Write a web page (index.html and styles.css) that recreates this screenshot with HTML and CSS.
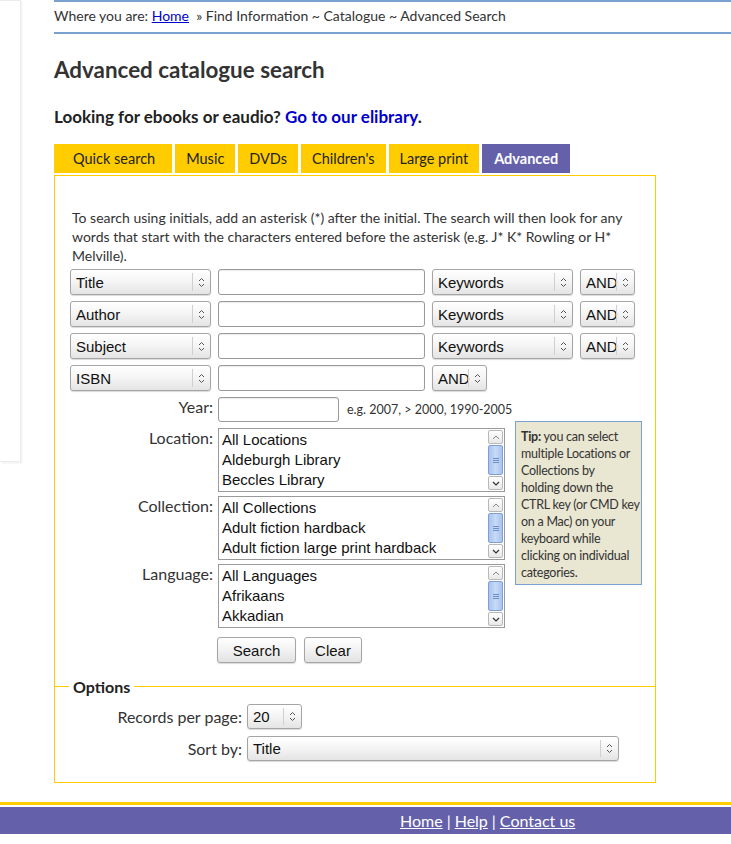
FILE: index.html
```html
<!DOCTYPE html>
<html lang="en">
<head>
<meta charset="utf-8">
<title>Advanced catalogue search</title>
<link rel="stylesheet" href="styles.css">
</head>
<body>
<div class="page">
  <div class="sidebar"></div>
  <div class="main">
    <div class="crumbs">Where you are: <a href="#">Home</a> &nbsp;» Find Information ~ Catalogue ~ Advanced Search</div>
    <h1>Advanced catalogue search</h1>
    <p class="ebooks">Looking for ebooks or eaudio? <a href="#">Go to our elibrary</a>.</p>
    <nav class="tabs">
      <a class="tab first" href="#">Quick search</a>
      <a class="tab" href="#">Music</a>
      <a class="tab" href="#">DVDs</a>
      <a class="tab" href="#">Children's</a>
      <a class="tab" href="#">Large print</a>
      <a class="tab active" href="#">Advanced</a>
    </nav>
    <div class="box">
      <p class="intro">To search using initials, add an asterisk (*) after the initial. The search will then look for any words that start with the characters entered before the asterisk (e.g. J* K* Rowling or H* Melville).</p>
      <div class="terms">
        <div class="term">
          <span class="sel w141"><span class="val">Title</span><span class="arr"><svg viewBox="0 0 7 11" width="7" height="11"><path d="M1 4 L3.5 1.5 L6 4 M1 7 L3.5 9.5 L6 7" fill="none" stroke="#555" stroke-width="1"/></svg></span></span>
          <span class="txt w206"></span>
          <span class="sel w141"><span class="val">Keywords</span><span class="arr"><svg viewBox="0 0 7 11" width="7" height="11"><path d="M1 4 L3.5 1.5 L6 4 M1 7 L3.5 9.5 L6 7" fill="none" stroke="#555" stroke-width="1"/></svg></span></span>
          <span class="sel w55"><span class="val">AND</span><span class="arr"><svg viewBox="0 0 7 11" width="7" height="11"><path d="M1 4 L3.5 1.5 L6 4 M1 7 L3.5 9.5 L6 7" fill="none" stroke="#555" stroke-width="1"/></svg></span></span>
        </div>
        <div class="term">
          <span class="sel w141"><span class="val">Author</span><span class="arr"><svg viewBox="0 0 7 11" width="7" height="11"><path d="M1 4 L3.5 1.5 L6 4 M1 7 L3.5 9.5 L6 7" fill="none" stroke="#555" stroke-width="1"/></svg></span></span>
          <span class="txt w206"></span>
          <span class="sel w141"><span class="val">Keywords</span><span class="arr"><svg viewBox="0 0 7 11" width="7" height="11"><path d="M1 4 L3.5 1.5 L6 4 M1 7 L3.5 9.5 L6 7" fill="none" stroke="#555" stroke-width="1"/></svg></span></span>
          <span class="sel w55"><span class="val">AND</span><span class="arr"><svg viewBox="0 0 7 11" width="7" height="11"><path d="M1 4 L3.5 1.5 L6 4 M1 7 L3.5 9.5 L6 7" fill="none" stroke="#555" stroke-width="1"/></svg></span></span>
        </div>
        <div class="term">
          <span class="sel w141"><span class="val">Subject</span><span class="arr"><svg viewBox="0 0 7 11" width="7" height="11"><path d="M1 4 L3.5 1.5 L6 4 M1 7 L3.5 9.5 L6 7" fill="none" stroke="#555" stroke-width="1"/></svg></span></span>
          <span class="txt w206"></span>
          <span class="sel w141"><span class="val">Keywords</span><span class="arr"><svg viewBox="0 0 7 11" width="7" height="11"><path d="M1 4 L3.5 1.5 L6 4 M1 7 L3.5 9.5 L6 7" fill="none" stroke="#555" stroke-width="1"/></svg></span></span>
          <span class="sel w55"><span class="val">AND</span><span class="arr"><svg viewBox="0 0 7 11" width="7" height="11"><path d="M1 4 L3.5 1.5 L6 4 M1 7 L3.5 9.5 L6 7" fill="none" stroke="#555" stroke-width="1"/></svg></span></span>
        </div>
        <div class="term">
          <span class="sel w141"><span class="val">ISBN</span><span class="arr"><svg viewBox="0 0 7 11" width="7" height="11"><path d="M1 4 L3.5 1.5 L6 4 M1 7 L3.5 9.5 L6 7" fill="none" stroke="#555" stroke-width="1"/></svg></span></span>
          <span class="txt w206"></span>
          <span class="sel w55"><span class="val">AND</span><span class="arr"><svg viewBox="0 0 7 11" width="7" height="11"><path d="M1 4 L3.5 1.5 L6 4 M1 7 L3.5 9.5 L6 7" fill="none" stroke="#555" stroke-width="1"/></svg></span></span>
        </div>
      </div>

      <div class="filters">
        <label class="lbl r-year">Year:</label>
        <div class="ctl r-year yearrow"><span class="txt w121 h25"></span><span class="hint">e.g. 2007, &gt; 2000, 1990-2005</span></div>

        <label class="lbl r-loc">Location:</label>
        <div class="ctl r-loc list">
          <div class="items"><div>All Locations</div><div>Aldeburgh Library</div><div>Beccles Library</div></div>
          <div class="sb"><span class="sb-up"><svg viewBox="0 0 8 5" width="8" height="5"><path d="M1 4 L4 1 L7 4" fill="none" stroke="#888"/></svg></span><span class="sb-thumb"><svg viewBox="0 0 6 7" width="6" height="7"><path d="M0 1.5H6M0 3.5H6M0 5.5H6" stroke="#6b8fc8"/></svg></span><span class="sb-down"><svg viewBox="0 0 8 5" width="8" height="5"><path d="M1 1 L4 4 L7 1" fill="none" stroke="#333" stroke-width="1.2"/></svg></span></div>
        </div>

        <label class="lbl r-col">Collection:</label>
        <div class="ctl r-col list">
          <div class="items"><div>All Collections</div><div>Adult fiction hardback</div><div>Adult fiction large print hardback</div></div>
          <div class="sb"><span class="sb-up"><svg viewBox="0 0 8 5" width="8" height="5"><path d="M1 4 L4 1 L7 4" fill="none" stroke="#888"/></svg></span><span class="sb-thumb"><svg viewBox="0 0 6 7" width="6" height="7"><path d="M0 1.5H6M0 3.5H6M0 5.5H6" stroke="#6b8fc8"/></svg></span><span class="sb-down"><svg viewBox="0 0 8 5" width="8" height="5"><path d="M1 1 L4 4 L7 1" fill="none" stroke="#333" stroke-width="1.2"/></svg></span></div>
        </div>

        <label class="lbl r-lang">Language:</label>
        <div class="ctl r-lang list">
          <div class="items"><div>All Languages</div><div>Afrikaans</div><div>Akkadian</div></div>
          <div class="sb"><span class="sb-up"><svg viewBox="0 0 8 5" width="8" height="5"><path d="M1 4 L4 1 L7 4" fill="none" stroke="#888"/></svg></span><span class="sb-thumb"><svg viewBox="0 0 6 7" width="6" height="7"><path d="M0 1.5H6M0 3.5H6M0 5.5H6" stroke="#6b8fc8"/></svg></span><span class="sb-down"><svg viewBox="0 0 8 5" width="8" height="5"><path d="M1 1 L4 4 L7 1" fill="none" stroke="#333" stroke-width="1.2"/></svg></span></div>
        </div>

        <div class="ctl r-btn buttons"><button class="btn w79">Search</button><button class="btn w58">Clear</button></div>

        <aside class="tip">
          <span class="tl"><b>Tip:</b> you can select</span>
          <span class="tl">multiple Locations or</span>
          <span class="tl">Collections by</span>
          <span class="tl">holding down the</span>
          <span class="tl">CTRL key (or CMD key</span>
          <span class="tl">on a Mac) on your</span>
          <span class="tl">keyboard while</span>
          <span class="tl">clicking on individual</span>
          <span class="tl">categories.</span>
        </aside>
      </div>

      <fieldset class="options">
        <legend>Options</legend>
        <div class="optgrid">
          <label class="olbl">Records per page:</label>
          <span class="sel w55 h25"><span class="val">20</span><span class="arr"><svg viewBox="0 0 7 11" width="7" height="11"><path d="M1 4 L3.5 1.5 L6 4 M1 7 L3.5 9.5 L6 7" fill="none" stroke="#555" stroke-width="1"/></svg></span></span>
          <label class="olbl">Sort by:</label>
          <span class="sel w372 h25"><span class="val">Title</span><span class="arr"><svg viewBox="0 0 7 11" width="7" height="11"><path d="M1 4 L3.5 1.5 L6 4 M1 7 L3.5 9.5 L6 7" fill="none" stroke="#555" stroke-width="1"/></svg></span></span>
        </div>
      </fieldset>
    </div>
  </div>
</div>
<footer class="footer">
  <div class="footer-bar"><a href="#">Home</a><span class="sep">|</span><a href="#">Help</a><span class="sep">|</span><a href="#">Contact us</a></div>
</footer>
</body>
</html>
```
FILE: styles.css
```css
* { box-sizing: border-box; }
html, body { margin: 0; padding: 0; background: #fff; }
body {
  font-family: "Lato", "Noto Sans", sans-serif;
  color: #333;
  font-size: 15px;
}
.page { display: flex; align-items: flex-start; }
.sidebar {
  width: 21px;
  height: 462px;
  border: 1px solid #ececec;
  border-left: none;
  box-shadow: 1px 1px 0 #f5f5f5, 2px 2px 0 #f8f8f8;
  flex: none;
}
.main { flex: 1; margin-left: 33px; }

.crumbs {
  height: 34px;
  border-top: 2px solid #7aa0cf;
  border-bottom: 2px solid #7aa0cf;
  font-size: 14px;
  line-height: 28px;
  color: #333;
}
.crumbs a { color: #0000cc; }

h1 {
  margin: 23px 0 0;
  font-size: 22.4px;
  line-height: 26px;
  font-weight: bold;
  color: #333;
}
.ebooks {
  margin: 24px 0 0;
  font-size: 17px;
  font-weight: bold;
  line-height: 20px;
  color: #222;
}
.ebooks a { color: #0000cc; text-decoration: none; }

.tabs { display: flex; gap: 3px; margin-top: 17px; height: 29px; }
.tab {
  display: block;
  background: #ffcc00;
  color: #222;
  text-decoration: none;
  font-size: 14.5px;
  line-height: 29px;
  padding: 0 11px;
}
.tab.first { padding: 0 17px 0 19px; }
.tab.active { background: #6461aa; color: #fff; font-weight: bold; padding: 0 12px; }

.box {
  width: 602px;
  margin-top: 2px;
  border: 1px solid #ffcc00;
  padding: 32px 0 0 0;
}
.intro {
  margin: 0 18px 0 17px;
  font-size: 14px;
  line-height: 19px;
  color: #333;
}
.terms { margin: 4px 0 0 15px; display: flex; flex-direction: column; gap: 6px; }
.term { display: flex; gap: 7px; }

.sel {
  position: relative;
  display: inline-flex;
  align-items: center;
  height: 26px;
  border: 1px solid #a5a5a5;
  border-radius: 3px;
  background: linear-gradient(#ffffff, #f4f4f4 50%, #e4e4e4);
  box-shadow: 0 1px 1px rgba(0,0,0,0.15);
  font-family: "Liberation Sans", Arial, sans-serif;
  font-size: 15px;
  color: #111;
  padding-left: 5px;
  flex: none;
}
.sel .arr {
  position: absolute;
  right: 0; top: 3px; bottom: 3px;
  width: 18px;
  border-left: 1px solid #d0d0d0;
  display: flex; align-items: center; justify-content: center;
}
.txt {
  display: inline-block;
  height: 26px;
  border: 1px solid #9a9a9a;
  border-radius: 3px;
  background: #fff;
  box-shadow: inset 0 1px 1px rgba(0,0,0,0.08);
  flex: none;
}
.w141 { width: 141px; }
.w206 { width: 207px; }
.w55 { width: 55px; }
.w121 { width: 121px; }
.w372 { width: 372px; }
.h25 { height: 25px; }

.filters {
  display: grid;
  grid-template-columns: 143px 287px 137px;
  column-gap: 5px;
  grid-template-rows: 27px 64px 64px 64px 31px;
  row-gap: 4px;
  margin: 6px 0 0 15px;
}
.filters .ctl { grid-column: 2; }
.r-year { grid-row: 1; }
.r-loc { grid-row: 2; }
.r-col { grid-row: 3; }
.r-lang { grid-row: 4; }
.r-btn { grid-row: 5; align-self: end; }
.lbl {
  grid-column: 1;
  text-align: right;
  font-size: 16px;
  line-height: 20px;
  color: #333;
}
.yearrow { display: flex; align-items: flex-start; gap: 8px; white-space: nowrap; }
.hint { font-size: 12.5px; line-height: 25px; color: #333; }

.list {
  border: 1px solid #9a9a9a;
  background: #fff;
  display: flex;
  height: 64px;
  font-family: "Liberation Sans", Arial, sans-serif;
  font-size: 15px;
  color: #111;
}
.items { flex: 1; padding: 1px 0 0 3px; line-height: 20px; }
.sb {
  width: 15px;
  margin: 1px 1px 1px 0;
  display: flex; flex-direction: column; gap: 1px;
}
.sb-up, .sb-down {
  height: 14px;
  border: 1px solid #b8b8b8;
  border-radius: 2px;
  background: linear-gradient(#fff, #e8e8e8);
  display: flex; align-items: center; justify-content: center;
}
.sb-thumb {
  flex: 1;
  border: 1px solid #7d9fd6;
  border-radius: 2px;
  background: linear-gradient(90deg, #a9c3ee, #c8daf6 50%, #a9c3ee);
  display: flex; align-items: center; justify-content: center;
}

.buttons { display: flex; gap: 8px; margin-left: -1px; }
.btn {
  height: 26px;
  border: 1px solid #a5a5a5;
  border-radius: 3px;
  background: linear-gradient(#ffffff, #f2f2f2 50%, #e2e2e2);
  box-shadow: 0 1px 1px rgba(0,0,0,0.15);
  font-family: "Liberation Sans", Arial, sans-serif;
  font-size: 15px;
  color: #111;
  padding: 0;
}
.w79 { width: 79px; }
.w58 { width: 58px; }

.tip {
  grid-column: 3;
  grid-row: 2 / 5;
  margin-left: 5px;
  width: 127px;
  align-self: start;
  margin-top: -7px;
  height: 164px;
  background: #e9e6d2;
  border: 1px solid #7aa0cf;
  padding: 6px 0 0 5px;
  font-size: 12.5px;
  letter-spacing: -0.25px;
  line-height: 17px;
  color: #333;
}
.tl { display: block; white-space: nowrap; }

.options {
  margin: 14px 0 0;
  border: none;
  border-top: 1px solid #ffcc00;
  padding: 8px 0 21px 14px;
}
.options legend {
  padding: 0 4px;
  font-size: 16px;
  font-weight: bold;
  color: #222;
}
.optgrid {
  display: grid;
  grid-template-columns: 173px auto;
  column-gap: 5px;
  row-gap: 7px;
  justify-content: start;
  align-items: center;
}
.olbl { text-align: right; font-size: 16px; color: #333; }

.footer { margin-top: 19px; border-top: 3px solid #ffcc00; padding-top: 2px; }
.footer-bar {
  background: #6461aa;
  height: 27px;
  padding-left: 400px;
  font-size: 16px;
  line-height: 27px;
  color: #fff;
}
.footer-bar a { color: #fff; }
.footer-bar .sep { margin: 0 4px; }
```
